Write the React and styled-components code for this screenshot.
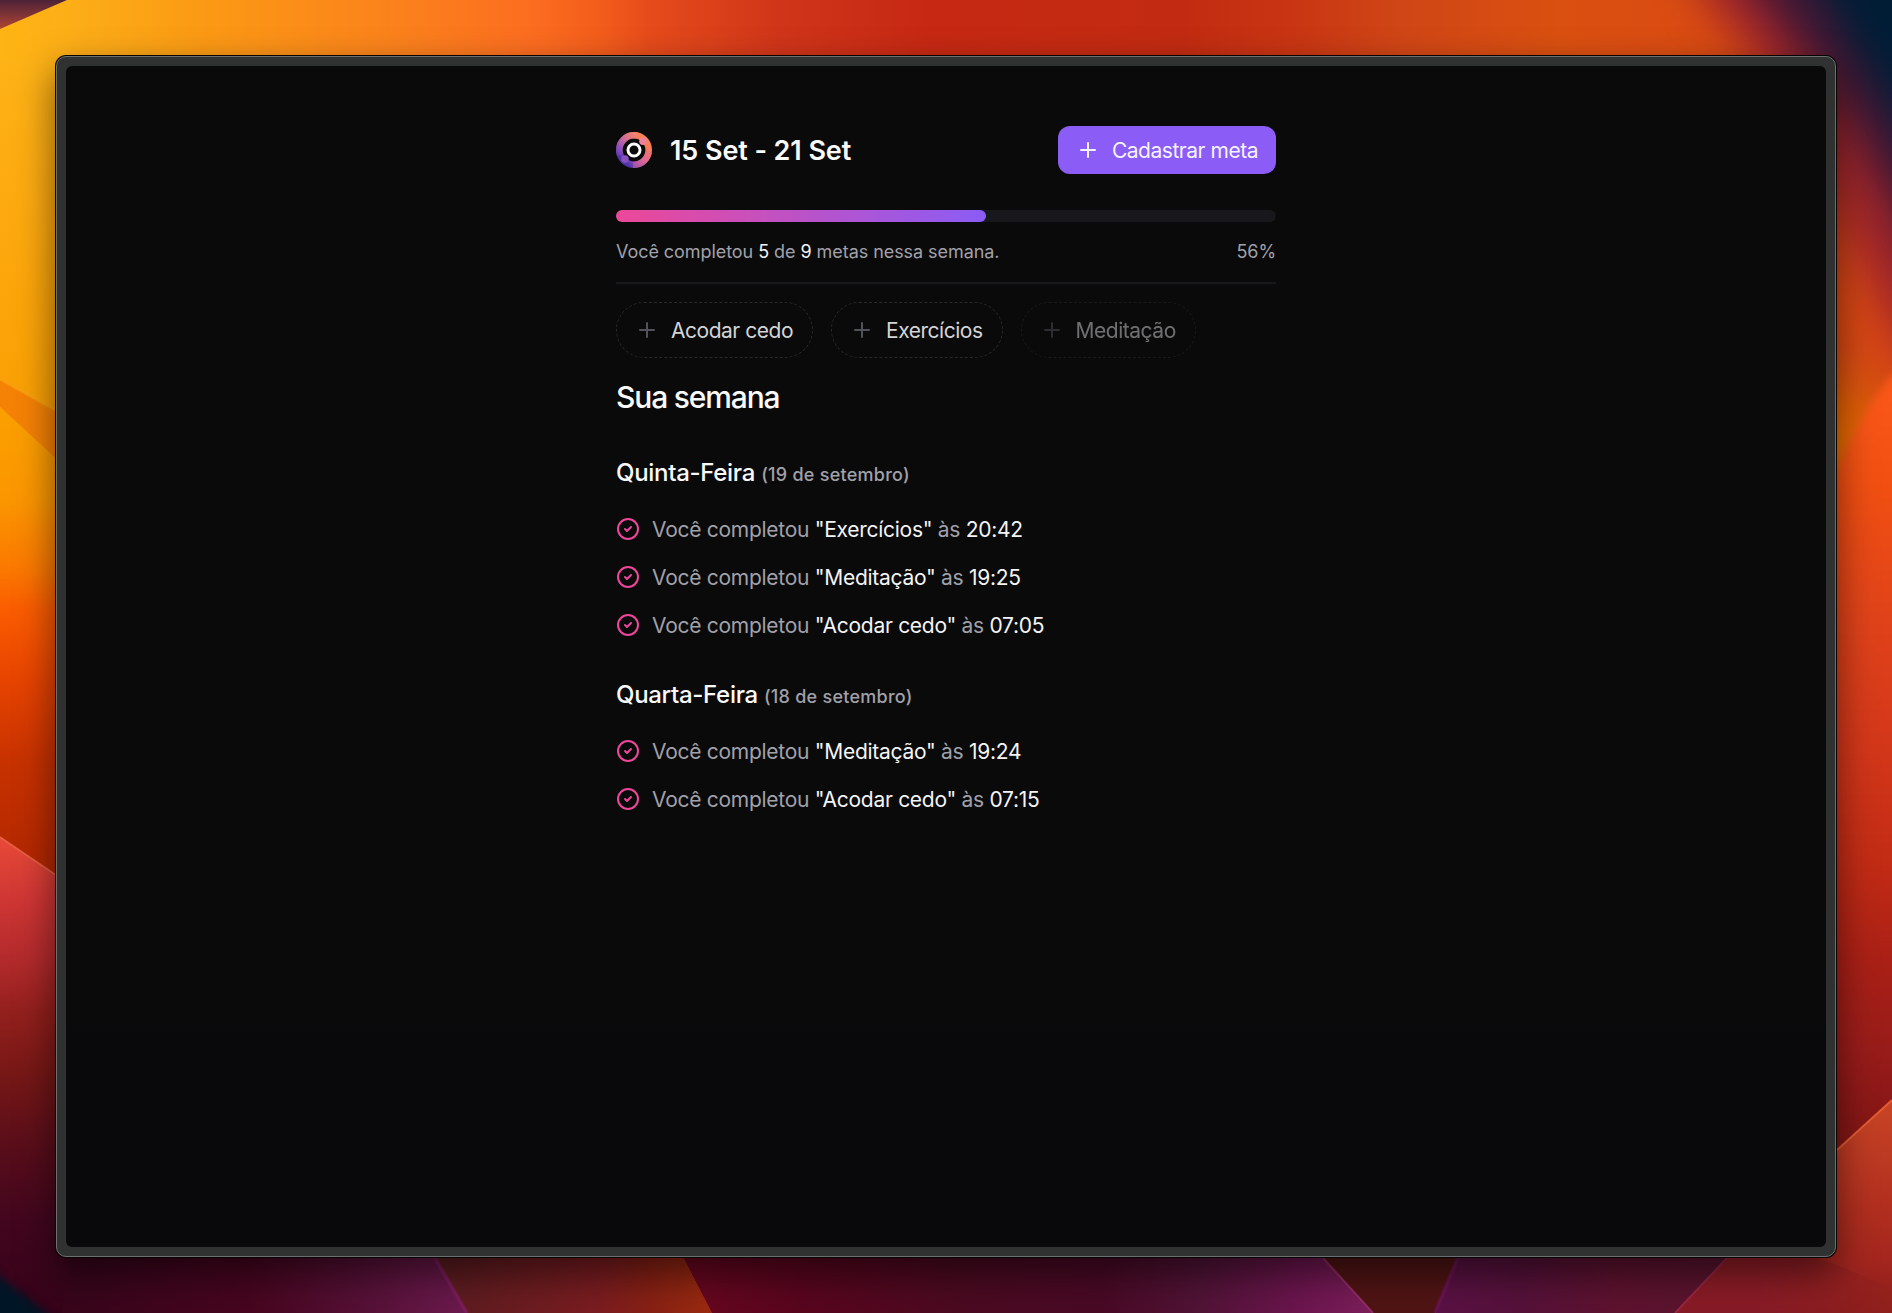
import React from "react";
import styled, { createGlobalStyle } from "styled-components";

const GlobalStyle = createGlobalStyle`
  *, *::before, *::after { box-sizing: border-box; }
  html, body { margin: 0; padding: 0; background: #021c33; }
  body {
    font-family: Inter, "Liberation Sans", sans-serif;
    -webkit-font-smoothing: antialiased;
    overflow: hidden;
  }
`;

const Desktop = styled.div`
  display: grid;
  grid-template: 1313px / 1892px;
  overflow: hidden;
  > * { grid-area: 1 / 1; }
`;

const WallpaperSvg = styled.svg`
  display: block;
  width: 1892px;
  height: 1313px;
  filter { color-interpolation-filters: sRGB; }
`;

const Frame = styled.div`
  z-index: 1;
  margin: 56px;
  padding: 9px;
  border: 1px solid #6b7170;
  border-radius: 10px;
  background: #303131;
  box-shadow: 0 0 0 1px #080404, 0 16px 36px 2px rgba(0, 0, 0, 0.5);
`;

const Screen = styled.main`
  display: flex;
  justify-content: center;
  height: 100%;
  padding-top: 60px;
  border-radius: 6px;
  background: linear-gradient(#0a0a0a 80%, #09090b 82%);
`;

const Summary = styled.div`
  width: 660px;
  display: flex;
  flex-direction: column;
`;

const Header = styled.header`
  display: flex;
  align-items: center;
  justify-content: space-between;
  height: 48px;
`;

const Brand = styled.div`
  display: flex;
  align-items: center;
  gap: 18px;
`;

const Period = styled.span`
  padding-top: 2px;
  font-size: 27px;
  line-height: 42px;
  font-weight: 600;
  letter-spacing: -0.09px;
  color: #fafafa;
`;

const PrimaryButton = styled.button`
  display: flex;
  align-items: center;
  gap: 12px;
  height: 48px;
  padding: 0 18px;
  border: 0;
  border-radius: 12px;
  background: #8b5cf6;
  color: #f5f3ff;
  font: 420 21px/30px Inter, sans-serif;
  letter-spacing: -0.47px;
  white-space: nowrap;
`;

const ButtonLabel = styled.span`
  padding-top: 1px;
`;

const Track = styled.div`
  height: 12px;
  margin-top: 36px;
  border-radius: 6px;
  background: #18181c;
`;

const Fill = styled.div`
  height: 12px;
  border-radius: 6px;
  background: linear-gradient(to right, #ec4899, #8b5cf6);
`;

const Stats = styled.div`
  display: flex;
  justify-content: space-between;
  margin-top: 18px;
  font-size: 18px;
  line-height: 24px;
  letter-spacing: -0.06px;
  color: #a1a1aa;
`;

const Strong = styled.span`
  color: #f4f4f5;
`;

const Divider = styled.div`
  height: 2px;
  margin: 18px 0;
  background: #18181c;
`;

const Pills = styled.div`
  display: flex;
  gap: 18px;
`;

const Pill = styled.button`
  display: flex;
  align-items: center;
  gap: 12px;
  height: 56px;
  padding: 0 19px 0 18px;
  border: 1px dashed #29292c;
  border-radius: 28px;
  background: transparent;
  color: #d4d4d8;
  font: 400 21px/21px Inter, sans-serif;
  letter-spacing: -0.475px;
  white-space: nowrap;
  opacity: ${(p) => (p.disabled ? 0.5 : 1)};
  svg { color: #52525b; }
`;

const SectionTitle = styled.h2`
  margin: 18px 0 0;
  font-size: 30px;
  line-height: 42px;
  font-weight: 500;
  letter-spacing: -1.15px;
  color: #fafafa;
`;

const Day = styled.section`
  margin-top: 36px;
`;

const DayTitle = styled.h3`
  height: 36px;
  margin: 0;
  padding-top: 1px;
  font-size: 24px;
  line-height: 36px;
  font-weight: 500;
  letter-spacing: -0.3px;
  color: #fafafa;
`;

const DayDate = styled.span`
  font-size: 18px;
  line-height: 1;
  letter-spacing: 0.26px;
  color: #a1a1aa;
`;

const List = styled.ul`
  display: flex;
  flex-direction: column;
  gap: 18px;
  margin: 24px 0 0;
  padding: 0;
  list-style: none;
`;

const Entry = styled.li`
  display: flex;
  align-items: center;
  gap: 12px;
  height: 30px;
  font-size: 21px;
  line-height: 30px;
  letter-spacing: -0.28px;
  color: #a1a1aa;
  svg { color: #ec4899; }
`;

const EntryText = styled.span`
  padding-top: 2px;
`;

const IconSvg = styled.svg`
  display: block;
  flex: none;
  width: 24px;
  height: 24px;
  fill: none;
  stroke: currentColor;
  stroke-width: 2;
  stroke-linecap: round;
  stroke-linejoin: round;
`;

const LogoSvg = styled.svg`
  display: block;
  width: 36px;
  height: 36px;
`;

const PlusIcon = () => (
  <IconSvg viewBox="0 0 24 24"><path d="M5 12h14M12 5v14" /></IconSvg>
);

const CheckIcon = () => (
  <IconSvg viewBox="0 0 24 24">
    <circle cx="12" cy="12" r="10" />
    <path d="m9 12 2 2 4-4" />
  </IconSvg>
);

const Logo = () => (
  <LogoSvg viewBox="0 0 36 36">
    <defs>
      <linearGradient id="ring" x1="0.85" y1="0.12" x2="0.15" y2="0.88">
        <stop offset="0" stopColor="#fb8150" />
        <stop offset="0.22" stopColor="#f4785f" />
        <stop offset="0.5" stopColor="#d9689a" />
        <stop offset="0.75" stopColor="#9250c0" />
        <stop offset="1" stopColor="#4d32a8" />
      </linearGradient>
      <linearGradient id="arcA" x1="1" y1="0" x2="0" y2="1">
        <stop offset="0" stopColor="#f58a86" />
        <stop offset="1" stopColor="#7a45bd" />
      </linearGradient>
    </defs>
    <circle cx="18" cy="18" r="14.7" fill="none" stroke="url(#ring)" strokeWidth="6.6" />
    <path d="M21 3.6A14.7 14.7 0 0 0 4.2 23" fill="none" stroke="url(#arcA)" strokeWidth="6.6" opacity="0.55" />
    <path d="M32.6 19.5A14.7 14.7 0 0 1 17 32.7" fill="none" stroke="#e66b86" strokeWidth="6.6" opacity="0.45" />
    <circle cx="27" cy="9.2" r="3.8" fill="#ee829c" />
    <circle cx="9" cy="27.1" r="3.8" fill="#8751bd" />
    <circle cx="18" cy="18" r="6" fill="none" stroke="#fff" strokeWidth="3" />
  </LogoSvg>
);

const Stops = ({ list }) =>
  list.map(([offset, color]) => <stop key={offset} offset={offset} stopColor={color} />);

/* Gradient whose stops are given in desktop pixels along one axis */
const AxisGradient = ({ id, axis, from, to, colors }) => (
  <linearGradient
    id={id}
    gradientUnits="userSpaceOnUse"
    x1={axis === "x" ? from : 0}
    x2={axis === "x" ? to : 0}
    y1={axis === "y" ? from : 0}
    y2={axis === "y" ? to : 0}
  >
    <Stops list={colors.map(([at, c]) => [(at - from) / (to - from), c])} />
  </linearGradient>
);

const Wallpaper = () => (
  <WallpaperSvg viewBox="0 0 1892 1313">
    <defs>
      <AxisGradient id="sky" axis="x" from={0} to={1892} colors={[
        [0, "#feb414"], [70, "#fcae17"], [200, "#fb9a14"], [400, "#fb811c"], [530, "#fc6d20"],
        [600, "#f35d1b"], [650, "#e54b1b"], [780, "#d03519"], [930, "#c62813"], [1180, "#c22b11"],
        [1300, "#c93613"], [1400, "#d04616"], [1560, "#da5010"], [1640, "#da4d12"], [1892, "#d84714"],
      ]} />
      <AxisGradient id="leftTop" axis="y" from={60} to={400} colors={[
        [60, "#fdb216"], [200, "#fdaa10"], [400, "#faa004"],
      ]} />
      <AxisGradient id="corner" axis="y" from={0} to={30} colors={[[0, "#4c2238"], [30, "#b34632"]]} />
      <AxisGradient id="leftA" axis="y" from={407} to={875} colors={[
        [407, "#fba000"], [500, "#fb9600"], [570, "#fb7800"], [610, "#fa5c00"], [680, "#e74400"],
        [760, "#c83200"], [875, "#b02600"],
      ]} />
      <AxisGradient id="leftB" axis="y" from={837} to={1313} colors={[
        [837, "#e84a38"], [900, "#cf3634"], [960, "#b32a2c"], [1010, "#94201d"], [1070, "#781816"],
        [1150, "#580d1a"], [1220, "#42061e"], [1313, "#350319"],
      ]} />
      <AxisGradient id="right" axis="y" from={375} to={1150} colors={[
        [375, "#fb581b"], [480, "#f25012"], [620, "#e0431a"], [750, "#d3371a"], [860, "#c32c15"],
        [960, "#aa2016"], [1050, "#981c1a"], [1150, "#801515"],
      ]} />
      <AxisGradient id="rightWedge" axis="y" from={1100} to={1313} colors={[
        [1100, "#c84526"], [1200, "#b3301f"], [1260, "#a4261e"], [1313, "#881d1c"],
      ]} />
      <AxisGradient id="wedgeFade" axis="x" from={1675} to={1892} colors={[
        [1675, "#86182d"], [1760, "#86182d"], [1892, "#93211a"],
      ]} />
      <AxisGradient id="b1" axis="x" from={0} to={467} colors={[
        [0, "#380419"], [80, "#38051b"], [250, "#47051f"], [360, "#551035"], [467, "#6c1a4e"],
      ]} />
      <AxisGradient id="b2" axis="x" from={435} to={712} colors={[
        [435, "#591c20"], [600, "#7b1c20"], [650, "#872014"], [712, "#9b2b10"],
      ]} />
      <AxisGradient id="b3" axis="x" from={683} to={1373} colors={[
        [683, "#68071f"], [800, "#59051e"], [960, "#4b0a20"], [1100, "#490925"], [1200, "#511336"],
        [1300, "#6c154e"], [1373, "#7c1e5a"],
      ]} />
      <AxisGradient id="b5" axis="x" from={1435} to={1727} colors={[
        [1435, "#5a1145"], [1520, "#56113a"], [1620, "#5e122e"], [1727, "#59142e"],
      ]} />
      <radialGradient id="amber" gradientUnits="userSpaceOnUse" cx="1830" cy="445" r="120">
        <stop offset="0" stopColor="#ea7000" />
        <stop offset="0.4" stopColor="#e06204" stopOpacity="0.8" />
        <stop offset="1" stopColor="#c8461a" stopOpacity="0" />
      </radialGradient>
      <filter id="soft20" x="-50%" y="-50%" width="200%" height="200%"><feGaussianBlur stdDeviation="20" /></filter>
      <filter id="soft4" x="-50%" y="-50%" width="200%" height="200%"><feGaussianBlur stdDeviation="4" /></filter>
      <filter id="soft1" x="-50%" y="-50%" width="200%" height="200%"><feGaussianBlur stdDeviation="1.2" /></filter>
    </defs>

    <rect width="1892" height="1313" fill="url(#sky)" />
    <rect y="60" width="56" height="360" fill="url(#leftTop)" />
    <path d="M0 0H67L0 29Z" fill="url(#corner)" />

    {/* navy bloom in the upper right corner */}
    <path d="M1660 -100L1705 0L1750 50L1840 225L1892 325L1990 500L2100 500V-100Z" fill="#a0262a" filter="url(#soft20)" />
    <path d="M1700 -100L1760 0L1805 55L1850 125L1892 205L1980 400L2100 400V-100Z" fill="#401835" filter="url(#soft20)" />
    <path d="M1765 -100L1825 0L1892 110L1990 280L2100 300V-100Z" fill="#001d36" filter="url(#soft20)" />
    <rect x="1700" y="320" width="192" height="260" fill="url(#amber)" />

    {/* right edge */}
    <path d="M1970 300L1892 376Q1862 410 1837 470L1700 720V1400H1970Z" fill="url(#right)" filter="url(#soft4)" />
    <path d="M1892 1100L1837 1150L1727 1258L1675 1313H1892Z" fill="url(#rightWedge)" />

    {/* left edge */}
    <path d="M0 380L56 411L100 500L0 407Z" fill="#f58205" />
    <path d="M0 378L56 410" stroke="#fca010" strokeWidth="3" filter="url(#soft1)" />
    <path d="M0 407L56 459L300 700V1000L56 875L0 837Z" fill="url(#leftA)" />
    <path d="M0 837L56 875L435 1258L467 1313H0Z" fill="url(#leftB)" />
    <path d="M0 837L56 875" stroke="#f06a50" strokeWidth="2" opacity="0.6" />

    {/* bottom edge */}
    <path d="M70 1240H500V1340H60Z" fill="url(#b1)" />
    <path d="M-30 1250L0 1277L46 1313L60 1330H-30Z" fill="#001526" filter="url(#soft4)" />
    <path d="M425 1240H674L712 1313H467Z" fill="url(#b2)" />
    <path d="M674 1240H1307L1373 1313H712Z" fill="url(#b3)" />
    <path d="M1307 1240H1465L1435 1313H1373Z" fill="#501414" />
    <path d="M1465 1240H1745L1675 1313H1435Z" fill="url(#b5)" />
    <path d="M1727 1258L1675 1313H1892V1290C1840 1262 1780 1245 1745 1240Z" fill="url(#wedgeFade)" opacity="0.6" />
    <path d="M435 1258L467 1313" stroke="#8d2070" strokeWidth="2" filter="url(#soft1)" />
    <path d="M1323 1258L1373 1313" stroke="#983070" strokeWidth="2" opacity="0.8" />
    <path d="M1458 1258L1435 1313" stroke="#6b145a" strokeWidth="3" filter="url(#soft1)" />
    <path d="M1727 1258L1675 1313" stroke="#a02848" strokeWidth="2" opacity="0.8" />
    <path d="M1892 1100L1837 1150" stroke="#f36735" strokeWidth="2" opacity="0.8" />
  </WallpaperSvg>
);

const goals = [
  { title: "Acodar cedo" },
  { title: "Exercícios" },
  { title: "Meditação", done: true },
];

const days = [
  {
    name: "Quinta-Feira",
    date: "(19 de setembro)",
    items: [["Exercícios", "20:42"], ["Meditação", "19:25"], ["Acodar cedo", "07:05"]],
  },
  {
    name: "Quarta-Feira",
    date: "(18 de setembro)",
    items: [["Meditação", "19:24"], ["Acodar cedo", "07:15"]],
  },
];

export default function App() {
  return (
    <>
      <GlobalStyle />
      <Desktop>
        <Wallpaper />
        <Frame>
          <Screen>
            <Summary>
              <Header>
                <Brand>
                  <Logo />
                  <Period>15 Set - 21 Set</Period>
                </Brand>
                <PrimaryButton><PlusIcon /><ButtonLabel>Cadastrar meta</ButtonLabel></PrimaryButton>
              </Header>

              <Track><Fill style={{ width: "56%" }} /></Track>
              <Stats>
                <span>Você completou <Strong>5</Strong> de <Strong>9</Strong> metas nessa semana.</span>
                <span>56%</span>
              </Stats>
              <Divider />

              <Pills>
                {goals.map((g) => (
                  <Pill key={g.title} disabled={g.done}><PlusIcon />{g.title}</Pill>
                ))}
              </Pills>

              <SectionTitle>Sua semana</SectionTitle>
              {days.map((day) => (
                <Day key={day.name}>
                  <DayTitle>{day.name} <DayDate>{day.date}</DayDate></DayTitle>
                  <List>
                    {day.items.map(([title, time]) => (
                      <Entry key={title}>
                        <CheckIcon />
                        <EntryText>Você completou <Strong>"{title}"</Strong> às <Strong>{time}</Strong></EntryText>
                      </Entry>
                    ))}
                  </List>
                </Day>
              ))}
            </Summary>
          </Screen>
        </Frame>
      </Desktop>
    </>
  );
}
